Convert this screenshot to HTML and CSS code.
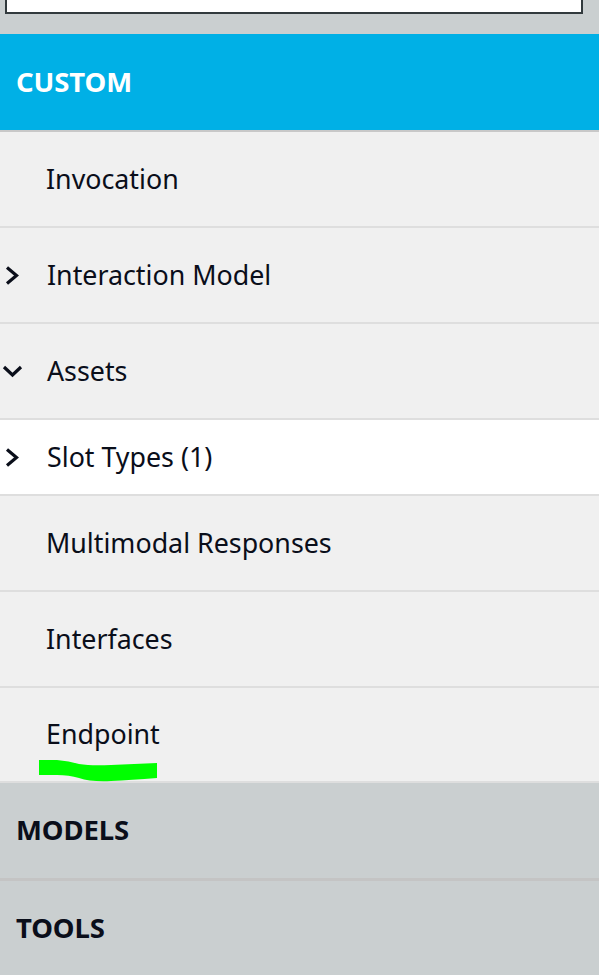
FILE: index.html
```html
<!DOCTYPE html>
<html>
<head>
<meta charset="utf-8">
<link rel="stylesheet" href="styles.css">
</head>
<body>
<div class="top">
  <div class="search"></div>
</div>
<nav class="nav">
  <div class="section section-active">CUSTOM</div>
  <ul class="items">
    <li class="item"><span class="chev"></span><span class="label">Invocation</span></li>
    <li class="item"><span class="chev"><svg width="16" height="22" viewBox="0 0 16 22"><path d="M3 3.5 L12.5 11.5 L3 19.5" fill="none" stroke="#0a0e1a" stroke-width="3.2"/></svg></span><span class="label shift">Interaction Model</span></li>
    <li class="item"><span class="chev down"><svg width="22" height="14" viewBox="0 0 22 14"><path d="M2 3 L10.5 11 L19 3" fill="none" stroke="#0a0e1a" stroke-width="3.2"/></svg></span><span class="label shift">Assets</span></li>
    <li class="item item-sub"><span class="chev"><svg width="16" height="22" viewBox="0 0 16 22"><path d="M3 3.5 L12.5 11.5 L3 19.5" fill="none" stroke="#0a0e1a" stroke-width="3.2"/></svg></span><span class="label shift">Slot Types (1)</span></li>
    <li class="item"><span class="chev"></span><span class="label">Multimodal Responses</span></li>
    <li class="item"><span class="chev"></span><span class="label">Interfaces</span></li>
    <li class="item item-mark"><span class="chev"></span><span class="label">Endpoint</span>
      <svg class="mark" width="120" height="24" viewBox="0 0 120 24"><path d="M0 0 L18 0 Q30 1 40 4 Q52 6 72 5 L118 3 L118 18 Q92 20 72 21 Q52 22 40 18 Q30 15 18 15 L0 15 Z" fill="#00ff00"/></svg>
    </li>
  </ul>
  <div class="section">MODELS</div>
  <div class="section section-last">TOOLS</div>
</nav>
</body>
</html>
```
FILE: styles.css
```css
html, body {
  margin: 0;
  padding: 0;
}
body {
  background: #cacfd0;
  font-family: "Noto Sans", "Open Sans", sans-serif;
  color: #0a0e1a;
  width: 599px;
  height: 975px;
  overflow: hidden;
}
.top {
  height: 34px;
  padding: 0 16px 0 5px;
}
.search {
  height: 12px;
  background: #fff;
  border: 2px solid #323a3d;
  border-top: none;
}
.nav {
  display: flex;
  flex-direction: column;
}
.section {
  height: 95px;
  display: flex;
  align-items: center;
  padding-left: 16px;
  padding-bottom: 2px;
  font-weight: 700;
  font-size: 27.5px;
  letter-spacing: -0.1px;
  background: #cacfd0;
  box-sizing: border-box;
}
.section-active {
  background: #00b0e6;
  color: #fff;
  border-bottom: 2px solid #c8c8c8;
  height: 98px;
}
.section + .section {
  border-top: 3px solid #c4c4c4;
  height: 97px;
}
.items {
  list-style: none;
  margin: 0;
  padding: 0;
}
.item {
  position: relative;
  height: 94px;
  display: flex;
  align-items: center;
  background: #f0f0f0;
  border-bottom: 2px solid #dedede;
  font-size: 26.8px;
}
.label {
  position: relative;
  top: -1px;
}
.item-sub {
  background: #fff;
  height: 74px;
}
.item-mark {
  height: 93px;
}
.chev {
  width: 46px;
  display: flex;
  align-items: center;
  padding-left: 4px;
  box-sizing: border-box;
}
.chev.down {
  padding-left: 2px;
}
.shift {
  margin-left: 1px;
}
.mark {
  position: absolute;
  left: 39px;
  top: 72px;
}
```
